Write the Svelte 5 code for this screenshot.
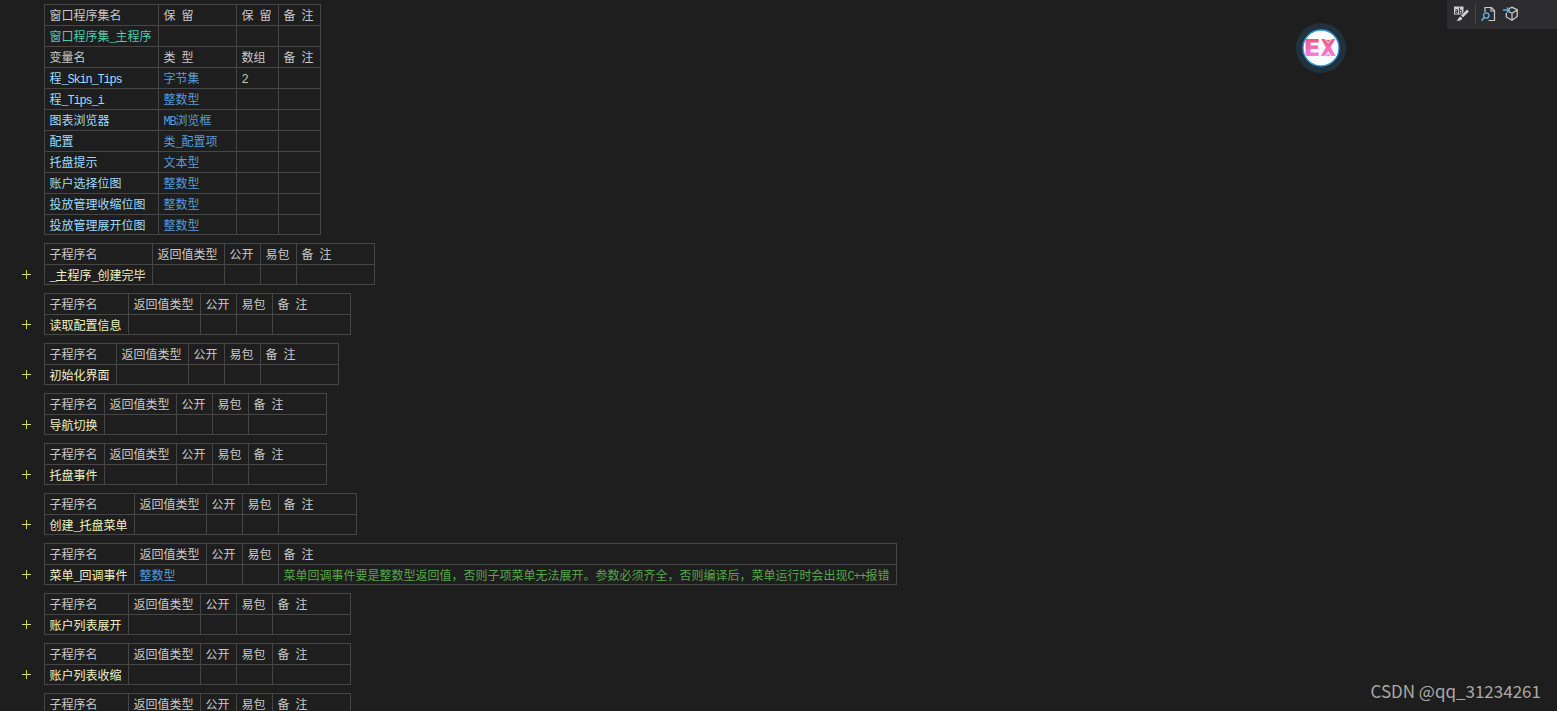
<script>
  const fields = [
    { kind: 'head', cells: ['窗口程序集名', '保 留', '保 留', '备 注'] },
    { kind: 'module', cells: ['窗口程序集_主程序', '', '', ''] },
    { kind: 'head', cells: ['变量名', '类 型', '数组', '备 注'] },
    { kind: 'var', cells: ['程_Skin_Tips', '字节集', '2', ''] },
    { kind: 'var', cells: ['程_Tips_i', '整数型', '', ''] },
    { kind: 'var', cells: ['图表浏览器', 'MB浏览框', '', ''] },
    { kind: 'var', cells: ['配置', '类_配置项', '', ''] },
    { kind: 'var', cells: ['托盘提示', '文本型', '', ''] },
    { kind: 'var', cells: ['账户选择位图', '整数型', '', ''] },
    { kind: 'var', cells: ['投放管理收缩位图', '整数型', '', ''] },
    { kind: 'var', cells: ['投放管理展开位图', '整数型', '', ''] }
  ];

  const subHead = ['子程序名', '返回值类型', '公开', '易包', '备 注'];
  const subs = [
    { name: '_主程序_创建完毕', w: 108 },
    { name: '读取配置信息', w: 84 },
    { name: '初始化界面', w: 72 },
    { name: '导航切换', w: 60 },
    { name: '托盘事件', w: 60 },
    { name: '创建_托盘菜单', w: 90 },
    {
      name: '菜单_回调事件',
      w: 90,
      type: '整数型',
      note: '菜单回调事件要是整数型返回值，否则子项菜单无法展开。参数必须齐全，否则编译后，菜单运行时会出现C++报错',
      noteW: 618
    },
    { name: '账户列表展开', w: 84 },
    { name: '账户列表收缩', w: 84 },
    { name: '', w: 84 }
  ];

  // Half-width runs are set on a 6px grid, full-width ones on a 12px grid.
  const runs = (s) => s.match(/[\x20-\x7e]+|[^\x20-\x7e]+/g) ?? [];
  const isHalf = (s) => /^[\x20-\x7e]/.test(s);
</script>

{#snippet txt(s)}{#each runs(s) as r}<span class:half={isHalf(r)}>{r}</span>{/each}{/snippet}

<div class="editor">
  <main class="code">
    <div class="table fields">
      {#each fields as row}
        <div class="row {row.kind}">
          {#each row.cells as c}<div class="cell">{@render txt(c)}</div>{/each}
        </div>
      {/each}
    </div>

    {#each subs as s}
      <div class="block">
        <div class="gutter">
          <svg width="9" height="9" viewBox="0 0 9 9" shape-rendering="crispEdges">
            <path d="M0 4h9v1H0z" fill="#dedb8a" /><path d="M4 0h1v9H4z" fill="#d6d62c" />
          </svg>
        </div>
        <div class="table" style="--cols: {s.w}px 72px 36px 36px {s.noteW ?? 78}px">
          <div class="row head">
            {#each subHead as c}<div class="cell">{@render txt(c)}</div>{/each}
          </div>
          <div class="row sub">
            <div class="cell">{@render txt(s.name)}</div>
            <div class="cell">{@render txt(s.type ?? '')}</div>
            <div class="cell"></div>
            <div class="cell"></div>
            <div class="cell note">{@render txt(s.note ?? '')}</div>
          </div>
        </div>
      </div>
    {/each}
  </main>

  <div class="toolbar">
    <svg class="i1" width="16" height="16" viewBox="0 0 16 16">
      <path d="M1 .500h9.500v8H1z" fill="#d0d0d0" />
      <path d="M2.300 3.700h2.200v3.500H2.500V5.400h2M6.500 1.700v5.500h2.200V4.200H6.500" fill="none" stroke="#2d2d30" stroke-width=".9" />
      <path d="M15 4.800L8.300 11.600" stroke="#2d2d30" stroke-width="4.200" />
      <path d="M15 4.500L9 10.500" stroke="#d0d0d0" stroke-width="2.600" />
      <path d="M7.300 10.400l2 2c-.6 1.900-2.400 2.600-6 2.400 2-.8 1.800-3.600 4-4.400z" fill="#d0d0d0" />
    </svg>
    <span class="sep"></span>
    <svg class="i2" width="16" height="16" viewBox="0 0 16 16" fill="none">
      <path d="M4 6V1.500h6.500l3 3v10H7.500M10 1.500V5h3.500" stroke="#c8c8c8" stroke-width="1.200" />
      <circle cx="5.300" cy="9.500" r="2.700" stroke="#62b0ea" stroke-width="1.300" />
      <path d="M3.400 11.400L.600 14.500" stroke="#62b0ea" stroke-width="1.600" />
    </svg>
    <svg class="i3" width="16" height="16" viewBox="0 0 16 16" fill="none">
      <path d="M6 2.500L9 1.300l5.200 2.400v6.800L9 14.300 3.300 11V7M4.500 5L9 7.300 14 4M9 7.300V14" stroke="#c8c8c8" stroke-width="1.300" />
      <path d="M0 4h6M3.800 1.500L6.500 4 3.800 6.500" stroke="#62b0ea" stroke-width="1.300" />
    </svg>
  </div>

  <svg class="badge" width="50" height="50" viewBox="0 0 50 50">
    <defs>
      <linearGradient id="pink" x1="0" y1="16" x2="0" y2="33" gradientUnits="userSpaceOnUse">
        <stop offset="0" stop-color="#f4567c" /><stop offset="1" stop-color="#ee82e6" />
      </linearGradient>
    </defs>
    <circle cx="25" cy="25" r="25" fill="#22323d" />
    <circle cx="25" cy="25" r="18" fill="#fff" stroke="#3196e0" stroke-width="1.300" />
    <text x="8.600" y="33" textLength="15.200" lengthAdjust="spacingAndGlyphs" fill="url(#pink)">E</text>
    <text x="24.200" y="33" textLength="16" lengthAdjust="spacingAndGlyphs" fill="url(#pink)">X</text>
    <path d="M29 16.400h6.400L32.200 19.800zM29 33.400h6.400L32.200 30z" fill="url(#pink)" stroke="#fff" stroke-width=".8" />
  </svg>

  <div class="mark">CSDN @qq_31234261</div>
</div>

<style>
  :global(body) { background: #1e1e1e; overflow: hidden; }
  .editor {
    position: relative;
    width: 1557px;
    height: 711px;
    overflow: hidden;
    background: #1e1e1e;
    font: 12px/20px 'Noto Sans CJK SC', sans-serif;
    color: #c8c8c8;
  }
  .code { display: flex; flex-direction: column; align-items: flex-start; gap: 8px; padding-top: 4px; }
  .table { width: max-content; border: solid #464646; border-width: 0 1px 1px 0; }
  .fields { --cols: 114px 78px 42px 42px; margin-left: 44px; }
  .row { display: grid; grid-template-columns: var(--cols); height: 21px; }
  .row:last-child { height: 20px; }
  .cell {
    box-sizing: border-box;
    border: solid #464646;
    border-width: 1px 0 0 1px;
    padding-left: 4.5px;
    white-space: pre;
    min-width: 0;
  }
  .half { font-family: 'Liberation Mono', monospace; letter-spacing: -1.2px; line-height: 1; }
  .module { color: #4ec9b0; }
  .var { color: #569cd6; }
  .var .cell:first-child { color: #9cdcfe; }
  .var .cell:nth-child(3) { color: #b5cea8; }
  .sub { color: #569cd6; }
  .sub .cell:first-child { color: #f0f0c0; }
  .sub .note { color: #57a64a; }
  .block { display: flex; }
  .gutter { width: 22px; padding: 27px 0 0 22px; line-height: 0; }

  .toolbar {
    position: absolute;
    top: 0;
    right: 0;
    box-sizing: border-box;
    width: 110px;
    height: 29px;
    padding: 0 0 1px 6px;
    display: flex;
    align-items: center;
    background: #2d2d30;
  }
  .sep { width: 1px; height: 20px; margin: 0 5px 0 6px; background: #464649; }
  .i3 { margin-left: 5.5px; }
  .badge { position: absolute; left: 1296px; top: 23px; }
  .badge text { font: 900 22.500px Inter, sans-serif; }
  .mark {
    position: absolute;
    left: 1370.5px;
    top: 681px;
    font: 17px/20px 'Noto Sans CJK SC', sans-serif;
    color: #a9a9a9;
    white-space: nowrap;
  }
</style>
